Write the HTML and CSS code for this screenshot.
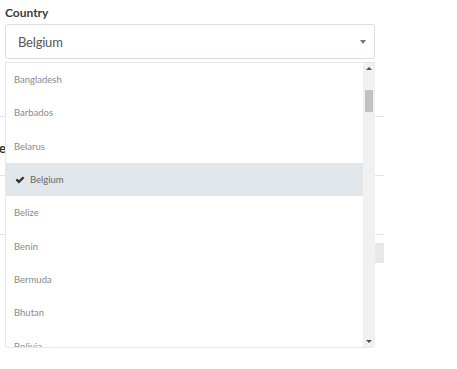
FILE: index.html
```html
<!DOCTYPE html>
<html>
<head>
<meta charset="utf-8">
<link rel="stylesheet" href="styles.css">
</head>
<body>
<div class="page">
  <div class="field">
    <label class="label">Country</label>
    <div class="select">
      <span class="value">Belgium</span>
      <span class="caret"></span>
    </div>
  </div>

  <div class="backdrop">
    <div class="row"></div>
    <div class="row"><span class="heading">Language</span></div>
    <div class="row"></div>
    <div class="btn-row"><span class="ghost-btn"></span></div>
  </div>

  <div class="dropdown">
    <ul class="options">
      <li class="option">Bangladesh</li>
      <li class="option">Barbados</li>
      <li class="option">Belarus</li>
      <li class="option selected">
        <svg class="check" viewBox="0 0 10 8" width="10" height="8"><path d="M0.6 4.2 L2.2 2.6 L3.9 4.3 L7.8 0.4 L9.4 2 L3.9 7.5 Z" fill="#333"/></svg>
        Belgium
      </li>
      <li class="option">Belize</li>
      <li class="option">Benin</li>
      <li class="option">Bermuda</li>
      <li class="option">Bhutan</li>
      <li class="option">Bolivia</li>
    </ul>
    <div class="scrollbar">
      <span class="arrow up"></span>
      <div class="track"><span class="thumb"></span></div>
      <span class="arrow down"></span>
    </div>
  </div>
</div>
</body>
</html>
```

FILE: styles.css
```css
* { box-sizing: border-box; }
html, body { margin: 0; padding: 0; background: #fff; }
body {
  font-family: "Lato", "Open Sans", sans-serif;
  color: #333;
  width: 457px;
  height: 369px;
  overflow: hidden;
}
.page { position: relative; width: 457px; height: 369px; }

.field { padding: 5px 0 0 5px; width: 375px; }
.label {
  display: block;
  font-size: 12px;
  line-height: 16px;
  font-weight: 700;
  color: #3a3a3a;
  margin-bottom: 3px;
}
.select {
  display: flex;
  align-items: center;
  justify-content: space-between;
  height: 35px;
  border: 1px solid #dcdcdc;
  border-radius: 3px;
  padding: 0 8px 0 12px;
}
.value { font-size: 13px; letter-spacing: -0.2px; color: #555; }
.caret {
  width: 0; height: 0;
  border-left: 3.5px solid transparent;
  border-right: 3.5px solid transparent;
  border-top: 4px solid #777;
}

.backdrop { width: 384px; }
.row {
  height: 59px;
  border-bottom: 1px solid #e3e3e3;
  display: flex;
  align-items: center;
  padding-top: 2px;
}
.backdrop .row:first-child { height: 58px; }
.heading {
  display: block;
  width: 6px;
  overflow: hidden;
  direction: rtl;
  white-space: nowrap;
  font-size: 13px;
  font-weight: 700;
  color: #333;
  margin-top: 2px;
}
.btn-row { display: flex; justify-content: flex-end; padding-top: 8px; }
.ghost-btn { display: block; width: 60px; height: 20px; background: #e8e8e8; }

.dropdown {
  position: absolute;
  left: 5px;
  top: 62px;
  width: 370px;
  height: 286px;
  border: 1px solid #e4e9ec;
  border-right: 0;
  border-radius: 0 0 3px 3px;
  background: #fff;
  display: flex;
  overflow: hidden;
}
.options {
  flex: 1;
  list-style: none;
  margin: 0;
  padding: 0;
  overflow: hidden;
}
.option {
  height: 33.3px;
  display: flex;
  align-items: center;
  padding-left: 8px;
  font-size: 9.5px;
  color: #8a8a8a;
}
.option.selected { background: #e1e7ea; color: #666; }
.check { margin-right: 5px; margin-left: 1px; }

.scrollbar {
  width: 12px;
  background: #f1f1f1;
  display: flex;
  flex-direction: column;
  align-items: center;
}
.arrow { width: 0; height: 0; border-left: 3px solid transparent; border-right: 3px solid transparent; }
.arrow.up { border-bottom: 3px solid #505050; margin-top: 4px; }
.arrow.down { border-top: 3px solid #505050; margin-bottom: 4px; }
.track { flex: 1; width: 100%; padding: 0 2px; }
.thumb { display: block; margin-top: 20px; height: 22px; background: #c1c1c1; }
```
